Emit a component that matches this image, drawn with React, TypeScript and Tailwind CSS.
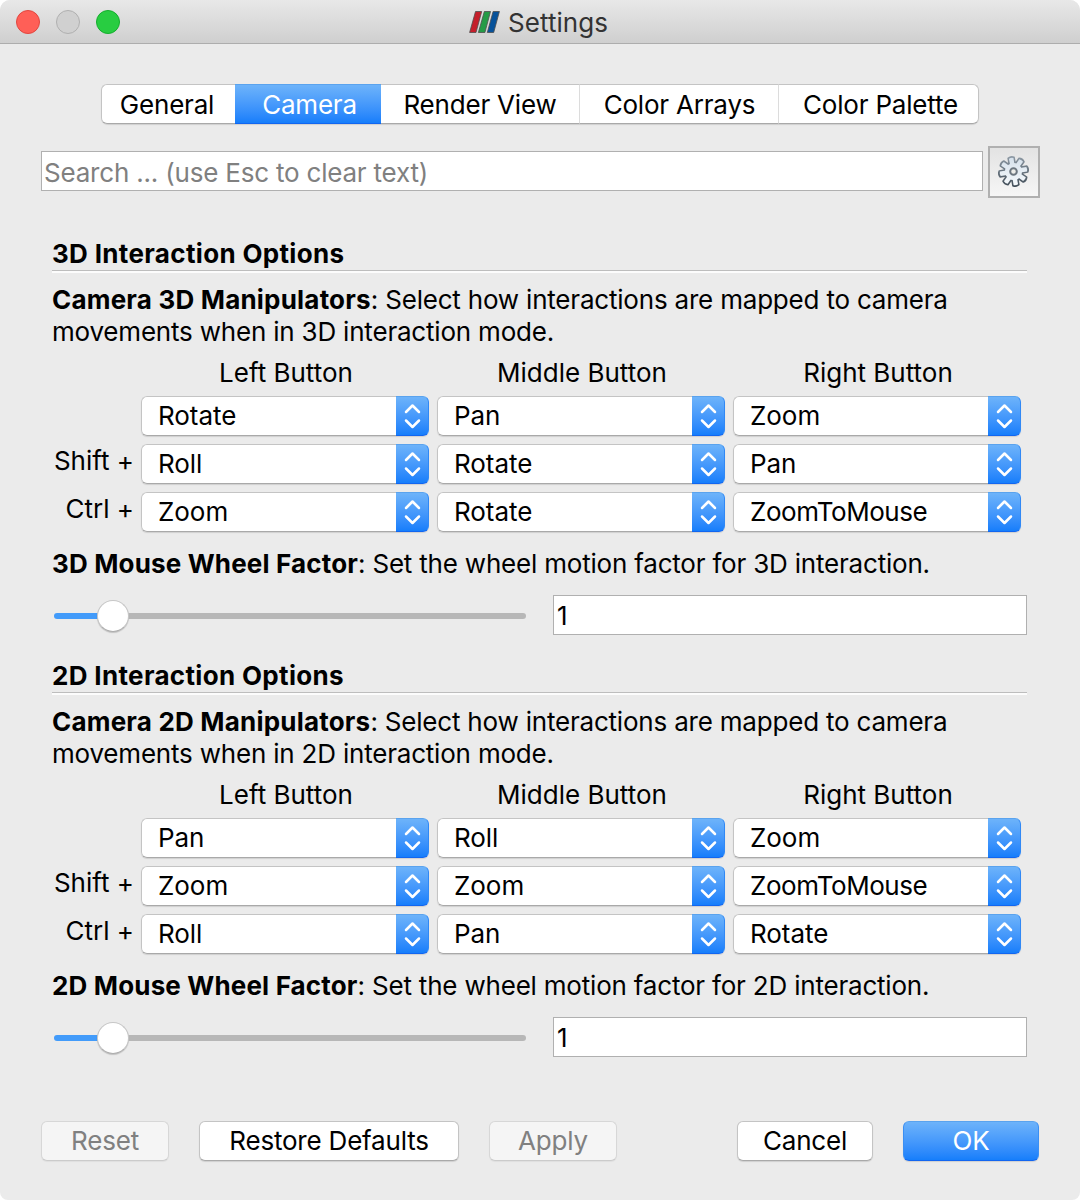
import React from "react";

const TABS = [
  { label: "General", box: "w-[134px] pr-[3px]" },
  { label: "Camera", box: "w-[146px] pl-[3px]" },
  { label: "Render View", box: "w-[199px]" },
  { label: "Color Arrays", box: "w-[199px] pl-px" },
  { label: "Color Palette", box: "w-[200px] pl-[4px]" },
];

function Chevrons() {
  return (
    <span className="flex h-full w-[33px] items-center justify-center rounded-r-[6px] border-y border-r border-t-[#5aa3ee] border-r-[#3088f5] border-b-[#1266f0] bg-linear-to-b from-[#6db3fa] to-[#157efb]">
      <svg width="18" height="26" viewBox="0 0 18 26" fill="none" stroke="white" strokeWidth="2.5" strokeLinecap="round" strokeLinejoin="round">
        <path d="M3 9 L9.5 2.5 L16 9" />
        <path d="M3 17.5 L9.5 24 L16 17.5" />
      </svg>
    </span>
  );
}

function Select({ value }: { value: string }) {
  const tracking = value === "ZoomToMouse" ? "tracking-[-0.45px]" : "tracking-[-0.05px]";
  return (
    <button className="flex h-10 w-[288px] items-center rounded-[6px] bg-white text-left shadow-[0_1px_1px_rgba(0,0,0,0.12)]">
      <span className={`flex h-full flex-1 items-center rounded-l-[6px] border-y border-l border-[#c4c4c4] border-b-[#a9a9a9] pl-4 ${tracking}`}>{value}</span>
      <Chevrons />
    </button>
  );
}

function Slider() {
  return (
    <div className="ml-0.5 flex h-[42px] w-[472px] items-center">
      <div className="h-1.5 w-[46px] rounded-l-full bg-[#429bfa]" />
      <div className="z-10 -mx-[3px] size-8 shrink-0 rounded-full border border-[#c6c6c6] border-b-[#adadad] bg-white shadow-[0_1px_1px_rgba(0,0,0,0.18)]" />
      <div className="h-1.5 flex-1 rounded-r-full bg-[#b7b7b7]" />
    </div>
  );
}

function Section({ dim, rows }: { dim: string; rows: string[][] }) {
  return (
    <section className="flex h-[422px] flex-col">
      <h2 className="h-8 font-bold tracking-[0.33px]">{dim} Interaction Options</h2>
      <div className="h-[3px] w-[975px] border-t border-[#bdbdbd] bg-[#fcfcfc]" />
      <p className="mt-[11px] whitespace-nowrap">
        <b className="tracking-[0.2px]">Camera {dim} Manipulators</b>: Select how interactions are mapped to camera
        <br />
        movements when in {dim} interaction mode.
      </p>
      <div className="mt-[9px] ml-[90px] flex h-8 gap-2 text-center tracking-[0px]">
        <span className="w-[288px]">Left Button</span>
        <span className="w-[288px]">Middle Button</span>
        <span className="w-[288px]">Right Button</span>
      </div>
      <div className="mt-[7px] flex flex-col gap-2">
        {rows.map((row, i) => (
          <div key={i} className="flex h-10">
            <span className="mr-[7px] flex h-[34px] w-[82px] items-center justify-end whitespace-nowrap tracking-[0px]">{["", "Shift +", "Ctrl +"][i]}</span>
            <div className="flex gap-2">
              {row.map((v, j) => (
                <Select key={j} value={v} />
              ))}
            </div>
          </div>
        ))}
      </div>
      <p className="mt-4 whitespace-nowrap">
        <b className="tracking-[0.16px]">{dim} Mouse Wheel Factor</b>: Set the wheel motion factor for {dim} interaction.
      </p>
      <div className="mt-[15px] flex gap-[27px]">
        <Slider />
        <input className="h-10 w-[474px] border border-[#b0b0b0] bg-white px-[3px] outline-none" defaultValue="1" />
      </div>
    </section>
  );
}

function Gear() {
  const teeth = [0, 45, 90, 135, 180, 225, 270, 315];
  return (
    <svg width="34" height="34" viewBox="-16.5 -16.5 34 34">
      <defs>
        <linearGradient id="rim" x1="0" y1="0" x2="0" y2="1">
          <stop offset="0" stopColor="#8f9ba6" />
          <stop offset="1" stopColor="#3f4b56" />
        </linearGradient>
        <linearGradient id="face" x1="0" y1="0" x2="0" y2="1">
          <stop offset="0" stopColor="#d3dfea" />
          <stop offset="1" stopColor="#f8fbfd" />
        </linearGradient>
        <mask id="gearRim">
          <rect x="-17" y="-17" width="35" height="35" fill="black" />
          <g transform="rotate(-10)" fill="white" stroke="white" strokeWidth="1.6" strokeLinejoin="round">
            {teeth.map((a) => (
              <path key={a} d="M-3-7 L-3-14 Q0-15.8 3-14 L3-7Z" transform={`rotate(${a})`} />
            ))}
            <circle r="9.2" />
          </g>
        </mask>
        <mask id="gearFace">
          <rect x="-17" y="-17" width="35" height="35" fill="black" />
          <g transform="rotate(-10)" fill="white">
            {teeth.map((a) => (
              <path key={a} d="M-2.2-7 L-2.3-13.4 Q0-14.4 2.3-13.4 L2.2-7Z" transform={`rotate(${a})`} />
            ))}
            <circle r="8.5" />
          </g>
        </mask>
      </defs>
      <rect x="-16" y="-16" width="32" height="32" fill="url(#rim)" mask="url(#gearRim)" />
      <rect x="-16" y="-16" width="32" height="32" fill="url(#face)" mask="url(#gearFace)" />
      <circle r="3.3" fill="#eeeeea" stroke="#6d7780" strokeWidth="2" />
    </svg>
  );
}

const plain = "border-[#c4c4c4] border-b-[#a9a9a9] bg-white shadow-[0_1px_1px_rgba(0,0,0,0.12)]";
const disabled = "border-[#d7d7d7] border-b-[#cbcbcb] bg-[#f5f5f5] text-[#808080] shadow-[0_1px_1px_rgba(0,0,0,0.05)]";
const primary = "border-[#3b8ff3] border-t-[#5aa3ee] border-b-[#1266f0] bg-linear-to-b from-[#6db3fa] to-[#157efb] text-white shadow-[0_1px_1px_rgba(0,0,0,0.12)]";

function Button({ label, className }: { label: string; className: string }) {
  return <button className={`h-10 rounded-[6px] border leading-none whitespace-nowrap ${className}`}>{label}</button>;
}

export default function App() {
  return (
    <div className="h-[1200px] w-[1080px] overflow-hidden bg-white font-['Inter',sans-serif] text-[26px] leading-8 tracking-[-0.2px] text-black">
      <div className="flex h-full flex-col rounded-t-[10px] rounded-b-[8px] bg-[#ebebeb]">
        <header className="grid h-11 grid-cols-[1fr_auto_1fr] items-center rounded-t-[10px] border-b border-[#adadad] bg-linear-to-b from-[#e8e8e8] to-[#cfcfcf]">
          <div className="flex gap-4 pl-4">
            <span className="size-6 rounded-full border border-[#e2463f] bg-[#ff5f57]" />
            <span className="size-6 rounded-full border border-[#b0b0b0] bg-[#d0d0d0]" />
            <span className="size-6 rounded-full border border-[#14ae2d] bg-[#28cd41]" />
          </div>
          <div className="flex items-center gap-[8px] pr-[3px] text-[#333333]">
            <svg width="31" height="24" viewBox="0 0 31 24" stroke="#4e4e4e" strokeWidth="0.8">
              <path d="M6.5 1.5H12.7L7 22.5H.6Z" fill="#c41f2b" />
              <path d="M15.3 1.5H21.5L15.9 22.5H9.4Z" fill="#259b46" />
              <path d="M24.1 1.5H30.4L24.7 22.5H18.3Z" fill="#07529a" />
            </svg>
            <span className="pt-0.5 tracking-[0.05px]">Settings</span>
          </div>
        </header>

        <nav className="mt-10 ml-[101px] flex h-10 w-[878px] rounded-[7px] bg-white shadow-[0_1px_1px_rgba(0,0,0,0.12)]">
          {TABS.map((t, i) => (
            <button
              key={t.label}
              className={`flex items-center justify-center border-y pt-0.5 whitespace-nowrap ${t.box} ${
                i === 1
                  ? "border-t-[#5aa3ee] border-b-[#1266f0] bg-linear-to-b from-[#6db3fa] to-[#157efb] text-white"
                  : "border-[#c4c4c4] border-b-[#a9a9a9]"
              } ${i === 0 ? "rounded-l-[6px] border-l" : ""} ${i === 4 ? "rounded-r-[6px] border-r" : ""} ${i === 2 || i === 3 ? "border-r border-r-[#dcdcdc]" : ""}`}
            >
              {t.label}
            </button>
          ))}
        </nav>

        <div className="mt-[22px] ml-[41px] flex h-[52px] gap-[5px]">
          <input
            className="mt-[5px] h-10 w-[942px] border border-[#b0b0b0] bg-white px-[2px] pt-0.5 outline-none placeholder:text-[#808080] placeholder:opacity-100"
            placeholder="Search ... (use Esc to clear text)"
          />
          <button className="flex size-[52px] items-center justify-center border-2 border-[#b0b0b0] bg-linear-to-b from-[#e3e3e3] to-[#f6f6f6]">
            <Gear />
          </button>
        </div>

        <main className="mt-10 ml-[52px]">
          <Section dim="3D" rows={[["Rotate", "Pan", "Zoom"], ["Roll", "Rotate", "Pan"], ["Zoom", "Rotate", "ZoomToMouse"]]} />
          <Section dim="2D" rows={[["Pan", "Roll", "Zoom"], ["Zoom", "Zoom", "ZoomToMouse"], ["Roll", "Pan", "Rotate"]]} />
        </main>

        <footer className="mt-[39px] ml-[41px] flex">
          <Button label="Reset" className={`w-32 ${disabled}`} />
          <Button label="Restore Defaults" className={`ml-[30px] w-[260px] ${plain}`} />
          <Button label="Apply" className={`ml-[30px] w-32 ${disabled}`} />
          <Button label="Cancel" className={`ml-[120px] w-[136px] ${plain}`} />
          <Button label="OK" className={`ml-[30px] w-[136px] ${primary}`} />
        </footer>
      </div>
    </div>
  );
}
